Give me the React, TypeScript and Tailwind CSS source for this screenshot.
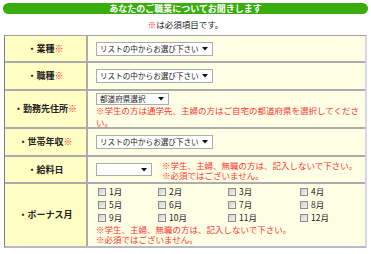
import type { ReactNode } from "react";

const months = ["1月", "2月", "3月", "4月", "5月", "6月", "7月", "8月", "9月", "10月", "11月", "12月"];

function Req() {
  return <span className="text-[#ff1a1a]">※</span>;
}

function FakeSelect({ text, className }: { text: string; className: string }) {
  return (
    <div
      className={`flex items-center justify-between gap-[2px] whitespace-nowrap border border-[#a5acb2] bg-white pl-[3px] pr-[4px] text-[7.6px] leading-none text-[#222] ${className}`}
    >
      <span>{text}</span>
      <svg width="6" height="4" viewBox="0 0 6 4" className="shrink-0">
        <path d="M0 0H6L3 3.5Z" fill="#111" />
      </svg>
    </div>
  );
}

function Row({
  label,
  req,
  h,
  last,
  children,
}: {
  label: string;
  req?: boolean;
  h: string;
  last?: boolean;
  children: ReactNode;
}) {
  const line = last ? "" : "border-b-2 border-[#acacac]";
  return (
    <>
      <div
        className={`flex items-center justify-center border-r-2 border-[#acacac] bg-[#ffffc4] text-[9px] font-bold text-[#222] ${line} ${h}`}
      >
        ・{label}
        {req && <Req />}
      </div>
      <div className={`bg-[#ffffe6] pl-[8px] ${line} ${h}`}>{children}</div>
    </>
  );
}

export default function App() {
  return (
    <div className="h-[254px] w-[371px] bg-white px-[3px] pt-[3px] font-['Noto_Sans_CJK_JP','Liberation_Sans',sans-serif]">
      {/* green heading bar */}
      <div className="h-[11px] rounded-full bg-[#38ad0c] text-center text-[9px] font-bold leading-[11px] text-white">
        あなたのご職業についてお聞きします
      </div>
      <div className="h-[21px] text-center text-[8.5px] leading-[21px] text-[#222]">
        <Req />は必須項目です。
      </div>

      <div className="mx-[1px] grid grid-cols-[83px_1fr] border-t border-l border-r-2 border-b-2 border-t-[#a0a0a0] border-l-[#7c7c94] border-r-[#d4d4ec] border-b-[#b8b8cc]">
        <Row label="業種" req h="h-[27px]">
          <div className="flex h-full items-center">
            <FakeSelect text="リストの中からお選び下さい" className="h-[14px] w-[117px]" />
          </div>
        </Row>
        <Row label="職種" req h="h-[28px]">
          <div className="flex h-full items-center">
            <FakeSelect text="リストの中からお選び下さい" className="h-[14px] w-[117px]" />
          </div>
        </Row>
        <Row label="勤務先住所" req h="h-[38px]">
          <div className="flex flex-col items-start pt-[2px]">
            <FakeSelect text="都道府県選択" className="h-[12px] w-[73px]" />
            <p className="whitespace-nowrap text-[8.5px] leading-[11.5px] text-[#ff3333]">
              ※学生の方は通学先、主婦の方はご自宅の都道府県を選択してくださ
            </p>
            <p className="text-[8.5px] leading-[11.5px] text-[#ff3333]">い。</p>
          </div>
        </Row>
        <Row label="世帯年収" req h="h-[28px]">
          <div className="flex h-full items-center">
            <FakeSelect text="リストの中からお選び下さい" className="h-[14px] w-[117px]" />
          </div>
        </Row>
        <Row label="給料日" h="h-[27px]">
          <div className="flex h-full items-center gap-[10px]">
            <FakeSelect text="" className="h-[13px] w-[56px]" />
            <p className="text-[8.5px] leading-[10px] text-[#ff3333]">
              ※学生、主婦、無職の方は、記入しないで下さい。
              <br />
              ※必須ではございません。
            </p>
          </div>
        </Row>
        <Row label="ボーナス月" h="h-[62px]" last>
          <div className="pt-[1px] pl-[2px]">
            <div className="grid grid-cols-[60px_70px_72px_1fr]">
              {months.map((m) => (
                <label key={m} className="flex h-[13px] items-center gap-[3px] text-[8.5px] leading-none text-[#222]">
                  <span className="h-[8px] w-[8px] border border-[#8c8c8c] bg-gradient-to-br from-[#d0d0d0] to-[#f4f4f4]" />
                  {m}
                </label>
              ))}
            </div>
            <p className="-ml-[2px] text-[8.5px] leading-[10px] text-[#ff3333]">
              ※学生、主婦、無職の方は、記入しないで下さい。
              <br />
              ※必須ではございません。
            </p>
          </div>
        </Row>
      </div>
    </div>
  );
}
